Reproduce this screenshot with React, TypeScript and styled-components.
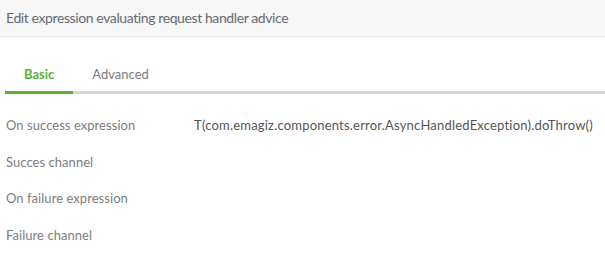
import React from "react";
import styled, { createGlobalStyle } from "styled-components";

const Global = createGlobalStyle`
  html, body { margin: 0; padding: 0; background: #ffffff; }
  body { font-family: Lato, "Open Sans", sans-serif; }
`;

const Page = styled.div`
  width: 605px;
  height: 255px;
  overflow: hidden;
  background: #ffffff;
`;

const Header = styled.div`
  height: 37px;
  box-sizing: border-box;
  background: #f7f7f7;
  border-bottom: 1px solid #e6e6e6;
  padding: 0 0 2px 6px;
  display: flex;
  align-items: center;
  font-size: 14px;
  letter-spacing: -0.4px;
  color: #666a73;
`;

const Tabs = styled.div`
  margin: 22px 0 0 5px;
  display: flex;
  border-bottom: 3px solid #d6d6d9;
`;

const Tab = styled.div<{ $active?: boolean }>`
  box-sizing: border-box;
  padding: 7px 19px 9px;
  margin-bottom: -3px;
  font-size: 13px;
  font-weight: ${(p) => (p.$active ? 700 : 400)};
  color: ${(p) => (p.$active ? "#5db32f" : "#7b7b7b")};
  border-bottom: 3px solid ${(p) => (p.$active ? "#5db32f" : "transparent")};
`;

const Rows = styled.div`
  padding: 23px 0 0 6px;
  display: flex;
  flex-direction: column;
`;

const Row = styled.div`
  display: grid;
  grid-template-columns: 188px 1fr;
  height: 36.5px;
  align-items: start;
  font-size: 13px;
`;

const Label = styled.div`
  color: #7d7d7d;
  letter-spacing: 0.05px;
`;

const Value = styled.div`
  color: #555555;
  letter-spacing: 0.2px;
  white-space: nowrap;
`;

const rows = [
  { label: "On success expression", value: "T(com.emagiz.components.error.AsyncHandledException).doThrow()" },
  { label: "Succes channel", value: "" },
  { label: "On failure expression", value: "" },
  { label: "Failure channel", value: "" },
];

export default function App() {
  return (
    <Page>
      <Global />
      <Header>Edit expression evaluating request handler advice</Header>
      <Tabs>
        <Tab $active>Basic</Tab>
        <Tab>Advanced</Tab>
      </Tabs>
      <Rows>
        {rows.map((r) => (
          <Row key={r.label}>
            <Label>{r.label}</Label>
            <Value>{r.value}</Value>
          </Row>
        ))}
      </Rows>
    </Page>
  );
}
